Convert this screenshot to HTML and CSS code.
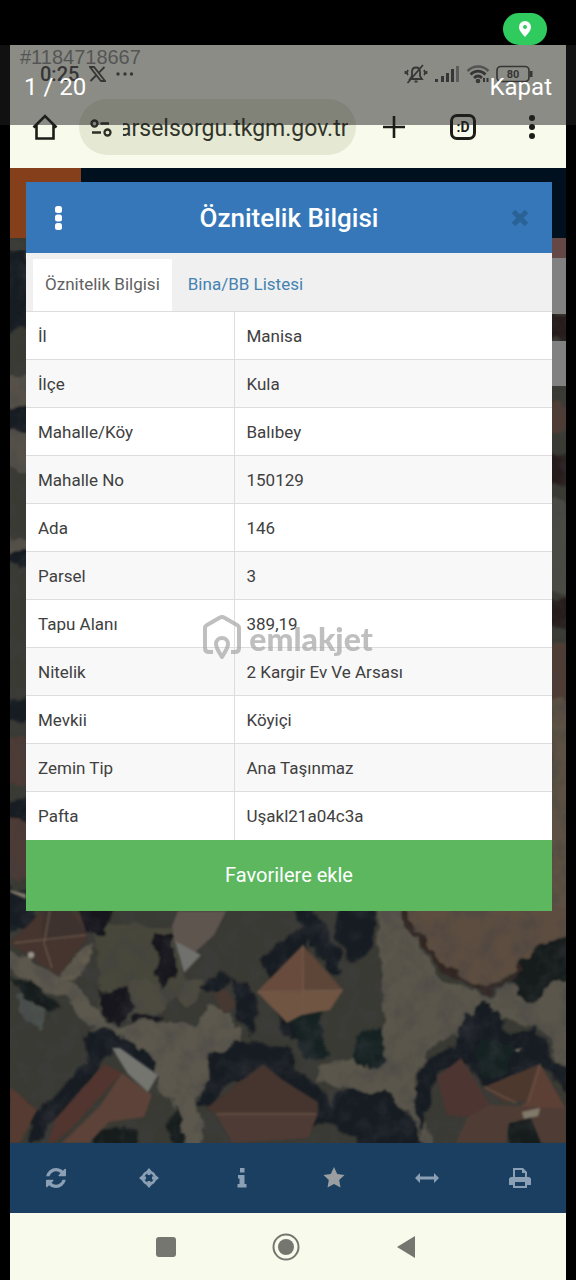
FILE: index.html
```html
<!DOCTYPE html>
<html lang="tr">
<head>
  <meta charset="UTF-8" />
  <meta name="viewport" content="width=device-width, initial-scale=1" />
  <title>Öznitelik Bilgisi</title>
  <link rel="stylesheet" href="styles.css">
</head>
<body>
  <div class="viewer">
    <div class="top-strip">
      <span class="location-pill">
        <svg width="14" height="18" viewBox="0 0 14 18"><path fill="#fff" fill-rule="evenodd" d="M7 1a6 6 0 0 1 6 6c0 4-4 7.500-6 10C5 14.500 1 11 1 7a6 6 0 0 1 6-6zm0 4a2 2 0 1 0 0 4 2 2 0 0 0 0-4z"/></svg>
      </span>
    </div>

    <div class="screen">
      <!-- Phone status bar -->
      <div class="status-bar">
        <span class="clock">0:25</span>
        <svg width="17" height="16" viewBox="0 0 17 16" fill="none" stroke="#4c4c4c" stroke-width="1.800"><path d="M1 1h4l11 14h-4zM15.500 1 9.500 7.200M7.500 9 1.500 15"/></svg>
        <svg width="18" height="4" viewBox="0 0 18 4" fill="#4c4c4c"><circle cx="2" cy="2" r="1.700"/><circle cx="9" cy="2" r="1.700"/><circle cx="15.500" cy="2" r="1.700"/></svg>
        <span class="status-icons">
          <svg width="24" height="20" viewBox="0 0 24 20" fill="none" stroke="#4c4c4c" stroke-width="1.800"><path d="M6 15h12l-2-3V8c0-3-1.500-4.500-4-4.500S8 5 8 8v4zM10.500 17.500h3M3.500 19 19 1M4 6c-1 1.500-1 4 0 5M20 6c1 1.500 1 4 0 5M1.500 7v3M22.500 7v3"/></svg>
          <svg width="26" height="18" viewBox="0 0 26 18" fill="#4c4c4c"><path d="M1 14h3v3H1zM7 11h3v6H7zM12 8h3v9h-3zM17 4h3v13h-3z"/><path fill="#999" d="M22 1h3v16h-3z"/></svg>
          <svg width="24" height="20" viewBox="0 0 24 20" fill="none" stroke="#4c4c4c" stroke-width="2.600"><path stroke="#888" d="M1.500 7c6-6 15-6 21 0"/><path d="M4.500 10.500c4.500-4.500 10.500-4.500 15 0M8 14c2.500-2.500 5.500-2.500 8 0"/><circle cx="12" cy="17" r="1"/><path stroke-width="2" d="M18 14v4M21.500 14v4"/></svg>
          <svg width="38" height="18" viewBox="0 0 38 18"><rect x="1" y="1.500" width="32" height="15" rx="4" fill="none" stroke="#4c4c4c" stroke-width="1.700"/><path fill="#4c4c4c" d="M34 6h2.500v6H34z"/><text x="17" y="13" text-anchor="middle" class="battery-text">80</text></svg>
        </span>
      </div>

      <!-- Browser address bar -->
      <div class="browser-bar">
        <button class="bar-btn" aria-label="Ana sayfa">
          <svg width="26" height="26" viewBox="0 0 26 26" fill="none" stroke="#1c1d19" stroke-width="2.600"><path d="M1.500 13.500 13 2l11.500 11.500M4.500 11v13.500h17V11"/></svg>
        </button>
        <label class="url-box">
          <svg width="22" height="18" viewBox="0 0 22 18" fill="none" stroke="#2d2f27" stroke-width="2.300"><circle cx="4.500" cy="4.500" r="3"/><path d="M10.500 4.500H19M2 13.500h9"/><circle cx="17.500" cy="13.500" r="3"/></svg>
          <input type="text" value="arselsorgu.tkgm.gov.tr" aria-label="Adres" />
        </label>
        <div class="bar-actions">
          <button class="bar-btn" aria-label="Yeni sekme">
            <svg width="24" height="24" viewBox="0 0 24 24" stroke="#1c1d19" stroke-width="2.600"><path d="M12 1v22M1 12h22"/></svg>
          </button>
          <button class="bar-btn" aria-label="Sekmeler"><span class="tab-count">:D</span></button>
          <button class="bar-btn" aria-label="Menü">
            <svg width="8" height="26" viewBox="0 0 8 26" fill="#1c1d19"><circle cx="4" cy="4" r="3"/><circle cx="4" cy="13" r="3"/><circle cx="4" cy="22" r="3"/></svg>
          </button>
        </div>
      </div>

      <!-- Map with attribute dialog -->
      <main class="map-area">
        <svg class="map" viewBox="10 168 556 975" preserveAspectRatio="xMidYMax slice" aria-hidden="true">
          <defs>
            <filter id="rough" x="0" y="0" width="100%" height="100%">
              <feTurbulence type="fractalNoise" baseFrequency=".06" numOctaves="3" seed="4" result="n"/>
              <feDisplacementMap in="SourceGraphic" in2="n" scale="16" xChannelSelector="R" yChannelSelector="G"/>
              <feGaussianBlur stdDeviation="1.200"/>
            </filter>
            <filter id="roof"><feGaussianBlur stdDeviation=".8"/></filter>
            <filter id="grain" x="0" y="0" width="100%" height="100%">
              <feTurbulence type="fractalNoise" baseFrequency=".05" numOctaves="4" seed="9"/>
              <feColorMatrix values="0 0 0 0 .05  0 0 0 0 .05  0 0 0 0 .06  1.800 0 0 0 -.75"/>
            </filter>
          </defs>
          <rect x="10" y="168" width="556" height="975" fill="#3a3a34"/>
          <g filter="url(#rough)">
            <!-- strip left of the dialog -->
            <path fill="#171a22" d="M0 250h30v80H0zM0 405h30v25H0zM0 550h30v14H0zM0 700h30v20H0zM0 800h30v30H0zM0 890h36v40H0z"/>
            <path fill="#55514a" d="M0 375h30v30H0zM0 430h30v40H0zM0 538h30v14H0z"/>
            <path fill="#4d3a34" d="M0 735h30v50H0zM0 820h30v60H0z"/>
            <!-- strip right of the dialog -->
            <path fill="#251f1d" d="M548 314h30v26h-30zM548 455h30v30h-30zM548 598h30v30h-30z"/>
            <path fill="#4c4c45" d="M548 500h30v90h-30z"/>
            <path fill="#4f3d35" d="M548 405h30v25h-30zM548 640h30v60h-30z"/>
            <path fill="#5b5143" d="M548 700h30v220h-30z"/>
            <!-- roads -->
            <path fill="#5b584d" d="M0 945 58 975 85 995 112 1025 150 1023 195 1023 215 1005 235 1020 242 1045 208 1068 198 1100 205 1150 187 1150 165 1095 155 1065 110 1035 82 1025 70 998 0 968z"/>
            <path fill="#5a564c" d="M375 905h30l15 45 30 35 40 10 35-18 45 5v90l-32-48-45-5-60 25-18 35 5 35 22 40h-20l-15-45-30-12-60-15v-15l50-12 18-35-5-60z"/>
            <path fill="#5b4e3f" d="M400 905h175v25l-35 20-22 15-28 24-30-8-35-32z"/>
            <path fill="#46463a" d="M95 925h80l10 70-45 25-40-10z"/>
            <path fill="#4e4c40" d="m128 980 18-5 22 25-12 18-28-5zM180 985l20-10 5 15-15 18-12-5z"/>
            <path fill="#625c50" d="M60 978 75 950 95 945 85 970 75 985z"/>
            <path fill="#4b514e" d="m18 995 10-8 18 20-5 20-20-8z"/>
            <!-- trees and shadows -->
            <path fill="#17191b" d="M75 905h40l-15 30h-15zM153 935h22v45l-15 8zM98 990l28-2 8 18-20 18-10-10zM130 1015h35l-10 8-20-2z"/>
            <path fill="#171c21" d="m262 960 45-40v30l-38 35zM290 905h20l30 48v18h-14zM335 905h38v45l-20 15-18-30zM200 990l20-15 30 10 10 30-8 20-15-20-5-35-20 15zM278 1005l20-5 10 45-25-8z"/>
            <path fill="#171c24" d="M210 1055l35-15 45 8 10 25 25 20 8 25-20 10-40-45-40-5-22 30-12-5zM85 1030h25l48 30-3 20-45-28-50 70-35 25 5-20-20-30 30 15 50-55z"/>
            <path fill="#181d23" d="m335 1090 50 3 30 30 10 25h-65l-30-30zM465 1015l20-15 15 15 10 22 22-14 15 25 25 25v20l-32-25-58 20-15-25-30 8-15 65-8-35 8-35 30-20z"/>
            <path fill="#172322" d="m480 1040 30 5v25l-25 8-10-20zM290 1015l30-5 8 50h-25zM355 1032l25-3 8 30-12 12-20-10z"/>
            <path fill="#191c1d" d="m520 960 20-15 35-15v50l-30 5-8 20-15-5-8-20zM508 1120l30-8 8 40h-35zM95 1130h40v20H95zM170 1100l14 20-3 30-12-8zM10 978l30 5 20 25-12 8-15-15-10-2z"/>
            <path fill="none" stroke="#302722" stroke-width="5" d="M401 905q22 60 82 84 22 2 38-25"/>
          </g>
          <rect x="10" y="168" width="556" height="975" filter="url(#grain)" opacity=".5"/>
          <g filter="url(#roof)">
            <!-- roofs -->
            <path fill="#45342f" d="m10 943 32-32 38 2 8 25-30 38-32-22z"/>
            <path fill="#3d302d" d="m42 911 28 0 16 22-44 10z"/>
            <path fill="#5f544f" d="M178 911h48l-12 24-20 18-20-12-2-15z"/>
            <path fill="#6f706d" d="m175 941 26 14-17 18z"/>
            <path fill="#5d4438" d="m303 945 40 45-86 2z"/>
            <path fill="#705542" d="m257 992 86-2-13 20-28 5-15 8z"/>
            <path fill="#684b3c" d="m303 945 1 48-47-1z"/>
            <path fill="#463832" d="m214 995 12-7 10 18-12 8z"/>
            <path fill="#51352f" d="m104 1064 18 9-52 57-17 13h-5l8-25z"/>
            <path fill="#5c4337" d="m122 1073 30 22-8 22-35 5-20 21H62l38-37z"/>
            <path fill="#74756f" d="m112 1048 8 0 38 27-10 17-20-18z"/>
            <path fill="#573b31" d="m10 1087 27 23-17 33H10z"/>
            <path fill="#44342f" d="m263 1064 20 16 35 22v12h-102l-11-5z"/>
            <path fill="#4f3b34" d="m216 1114 102 0-10 24-75 5z"/>
            <path fill="#4d3432" d="m437 1077 24-19 29 47-22 12-21-2z"/>
            <path fill="#4d372f" d="m484 1087 56-23-12 37-25 1z"/>
            <path fill="#5d3f35" d="m540 1064 26 45h-50l12-8z"/>
            <path fill="#4f3e36" d="m468 1117 22-12 76 3v35h-25l-10-25-22 5-3 20h-50z"/>
            <path fill="#817969" d="m522 1112 18-4-2 8-14 3zM514 1050l8-2-4 4zM10 890l16 4v5l-16-7z"/>
            <path fill="none" stroke="#755f4f" d="M303 945v68M257 992l86-2M14 943l72-8M50 911l-6 32 8 25M216 1114h100M484 1087l32 16M540 1064l-12 38"/>
            <circle cx="31" cy="955" r="3" fill="#99958d"/>
          </g>
          <!-- page header and map controls behind the dialog -->
          <path fill="#01101f" d="M10 168h556v70H10z"/>
          <path fill="#85401b" d="M10 168h71v70H10z"/>
          <path fill="#654746" d="M540 238h26v20h-26z"/>
          <path fill="#818181" d="M540 258h26v56h-26zM540 341h26v45h-26z"/>
        </svg>

        <section class="dialog">
          <header class="dialog-header">
            <button aria-label="Seçenekler">
              <svg width="8" height="26" viewBox="0 0 8 26" fill="#fff"><rect x="1" y="1" width="7" height="7" rx="2.500"/><rect x="1" y="9.500" width="7" height="7" rx="2.500"/><rect x="1" y="18" width="7" height="7" rx="2.500"/></svg>
            </button>
            <h1>Öznitelik Bilgisi</h1>
            <button aria-label="Kapat">
              <svg width="18" height="18" viewBox="0 0 18 18" stroke="#2b6296" stroke-width="5"><path d="m2.500 2.500 13 13M15.500 2.500l-13 13"/></svg>
            </button>
          </header>
          <nav class="tabs">
            <a href="#oznitelik" class="tab active">Öznitelik Bilgisi</a>
            <a href="#bina" class="tab">Bina/BB Listesi</a>
          </nav>
          <table class="attributes" id="oznitelik">
            <tr><th scope="row">İl</th><td>Manisa</td></tr>
            <tr><th scope="row">İlçe</th><td>Kula</td></tr>
            <tr><th scope="row">Mahalle/Köy</th><td>Balıbey</td></tr>
            <tr><th scope="row">Mahalle No</th><td>150129</td></tr>
            <tr><th scope="row">Ada</th><td>146</td></tr>
            <tr><th scope="row">Parsel</th><td>3</td></tr>
            <tr><th scope="row">Tapu Alanı</th><td>389,19</td></tr>
            <tr><th scope="row">Nitelik</th><td>2 Kargir Ev Ve Arsası</td></tr>
            <tr><th scope="row">Mevkii</th><td>Köyiçi</td></tr>
            <tr><th scope="row">Zemin Tip</th><td>Ana Taşınmaz</td></tr>
            <tr><th scope="row">Pafta</th><td>Uşakl21a04c3a</td></tr>
          </table>
          <button class="favorite-btn">Favorilere ekle</button>
        </section>
      </main>

      <!-- Map toolbar -->
      <div class="toolbar">
        <button aria-label="Yenile">
          <svg width="20" height="24" viewBox="0 0 1536 1792"><path d="M1511 1056q0 5-1 7-64 268-268 434.500t-478 166.500q-146 0-282.500-55t-243.500-157l-129 129q-19 19-45 19t-45-19-19-45v-448q0-26 19-45t45-19h448q26 0 45 19t19 45-19 45l-137 137q71 66 161 102t187 36q134 0 250-65t186-179q11-17 53-117 8-23 30-23h192q13 0 22.500 9.500t9.500 22.500zm25-800v448q0 26-19 45t-45 19h-448q-26 0-45-19t-19-45 19-45l138-138q-148-137-349-137-134 0-250 65t-186 179q-11 17-53 117-8 23-30 23h-199q-13 0-22.500-9.500t-9.500-22.500v-7q65-268 270-434.500t480-166.500q146 0 284 55.500t245 156.500l130-129q19-19 45-19t45 19 19 45z"/></svg>
        </button>
        <button aria-label="Konum">
          <svg width="20" height="20" viewBox="0 0 20 20"><circle cx="10" cy="10" r="6" fill="none" stroke="#8ba0b4" stroke-width="2.500"/><path d="m10 0 3 3.500h-1.500V7h-3V3.500H7zM10 20l-3-3.500h1.500V13h3v3.500H13zM0 10l3.500-3v1.500H7v3H3.500V13zM20 10l-3.500 3v-1.500H13v-3h3.500V7z"/></svg>
        </button>
        <button aria-label="Bilgi">
          <svg width="10" height="20" viewBox="0 0 10 20"><path d="M3 0h4.500v4.500H3zM1 7h6.500v9H9.500v3.500H.5V16h2v-5.500H1z"/></svg>
        </button>
        <button aria-label="Favoriler">
          <svg width="22" height="22" viewBox="0 0 22 22"><path fill="#9a9ea1" d="m11 0 3.200 7 7.300.900-5.300 5 1.300 7.600L11 17l-6.500 3.500 1.300-7.600-5.300-5L7.800 7z"/></svg>
        </button>
        <button aria-label="Ölçüm">
          <svg width="24" height="10" viewBox="0 0 24 10"><path d="M0 5 5 0v3.500h14V0l5 5-5 5V6.500H5V10z"/></svg>
        </button>
        <button aria-label="Yazdır">
          <svg width="22" height="20" viewBox="0 0 22 20"><path fill-rule="evenodd" d="M4 0h10l4 4v5h1.500A2.500 2.500 0 0 1 22 11.500V17h-4v3H4v-3H0v-5.500A2.500 2.500 0 0 1 2.500 9H4zm2 2v7h10V5h-3V2zm0 12v4h10v-4z"/></svg>
        </button>
      </div>

      <!-- Android navigation -->
      <div class="system-nav">
        <button aria-label="Son uygulamalar"><svg width="20" height="20" viewBox="0 0 20 20"><rect width="20" height="20" rx="3"/></svg></button>
        <button aria-label="Ana ekran"><svg width="28" height="28" viewBox="0 0 28 28"><circle cx="14" cy="14" r="12.500" fill="none" stroke="#74766f" stroke-width="2"/><circle cx="14" cy="14" r="8"/></svg></button>
        <button aria-label="Geri"><svg width="20" height="24" viewBox="0 0 20 24"><path d="M19 1v22L1 12z"/></svg></button>
      </div>
    </div>

    <!-- Gallery overlay -->
    <div class="gallery-bar">
      <span>1 / 20</span>
      <button>Kapat</button>
    </div>
    <div class="listing-no">#1184718667</div>
    <div class="watermark">
      <svg width="38" height="46" viewBox="0 0 38 46" fill="none" stroke="#aaa" stroke-width="4" stroke-linejoin="round"><path d="M10 37H6q-4 0-4-4V13q0-2 2-3L17 2.500q2-1 4 0L34 10q2 1 2 3v20q0 4-4 4h-4"/><path d="M19 42c-3-5-6-9-6-13a6 6 0 0 1 12 0c0 4-3 8-6 13z"/></svg>
      <span>emlakjet</span>
    </div>
  </div>
</body>
</html>
```
FILE: styles.css
```css
* {
  box-sizing: border-box;
}

body {
  font-family: Roboto, sans-serif;
  background: #000;
  margin: 0;
}

button {
  background: none;
  border: none;
  padding: 0;
  font-family: inherit;
  cursor: pointer;
}

svg {
  display: block;
}

.viewer {
  position: relative;
  min-height: 100vh;
  display: flex;
  flex-direction: column;
}

.top-strip {
  display: flex;
  justify-content: flex-end;
  padding: 13px 29px 0;
}

.location-pill {
  display: flex;
  align-items: center;
  justify-content: center;
  width: 44px;
  height: 32px;
  border-radius: 16px;
  background: #2fcb5f;
}

.screen {
  flex: 1;
  display: flex;
  flex-direction: column;
  margin: 0 10px;
  background: #f8fbec;
}

/* Status and address bars */
.status-bar {
  display: flex;
  align-items: center;
  gap: 10px;
  height: 54px;
  padding: 4px 32px 0 30px;
  color: #4c4c4c;
}

.clock {
  font-size: 20px;
  font-weight: 500;
}

.status-icons {
  display: flex;
  align-items: center;
  gap: 6px;
  margin-left: auto;
}

.battery-text {
  font-size: 11px;
  font-weight: 700;
  fill: #4c4c4c;
}

.browser-bar {
  display: grid;
  grid-template-columns: 69px 1fr 210px;
  padding-bottom: 13px;
}

.bar-btn {
  display: flex;
  align-items: center;
  justify-content: center;
}

.url-box {
  display: flex;
  align-items: center;
  gap: 11px;
  min-width: 0;
  height: 56px;
  padding: 2px 8px 0 11px;
  border-radius: 28px;
  background: #e5e9d4;
}

.url-box svg {
  flex-shrink: 0;
}

.url-box input {
  flex: 1;
  min-width: 0;
  padding: 0;
  border: none;
  background: none;
  font-family: inherit;
  font-size: 23px;
  color: #32342b;
  text-indent: -4px;
}

.bar-actions {
  display: grid;
  grid-template-columns: repeat(3, 1fr);
  padding-left: 4px;
}

.tab-count {
  width: 26px;
  height: 26px;
  border: 3px solid #1c1d19;
  border-radius: 7px;
  font-size: 14px;
  line-height: 20px;
  font-weight: 700;
  color: #1c1d19;
}

/* Map and dialog share one grid cell */
.map-area {
  flex: 1;
  display: grid;
  align-items: start;
}

.map,
.dialog {
  grid-area: 1 / 1;
}

.map {
  width: 100%;
  height: 100%;
  min-height: 0;
  contain: size;
}

.dialog {
  margin: 14px 14px 232px 16px;
  background: #fff;
  color: #404040;
  font-size: 17px;
}

.dialog-header {
  display: grid;
  grid-template-columns: 64px 1fr 64px;
  align-items: center;
  height: 71px;
  background: #3577b8;
}

.dialog-header button {
  display: flex;
  justify-content: center;
}

.dialog-header h1 {
  margin: 0;
  font-size: 26px;
  font-weight: 500;
  color: #fff;
  text-align: center;
}

.tabs {
  display: flex;
  height: 58px;
  padding: 6px 7px 0;
  background: #f0f0f0;
  gap: 4px;
}

.tab {
  padding: 0 12px;
  line-height: 51px;
  color: #4482b0;
  text-decoration: none;
}

.tab.active {
  background: #fff;
  color: #606060;
}

.attributes {
  width: 100%;
  border-collapse: collapse;
}

.attributes th,
.attributes td {
  height: 48px;
  padding: 0 12px;
  border-top: 1px solid #ddd;
  font-weight: 400;
  text-align: left;
}

.attributes th {
  width: 208px;
  border-right: 1px solid #ddd;
}

.attributes tr:nth-child(even) {
  background: #f8f8f8;
}

.favorite-btn {
  width: 100%;
  height: 71px;
  background: #5cb75f;
  color: #fff;
  font-size: 20px;
}

/* Bottom bars */
.toolbar {
  display: grid;
  grid-template-columns: repeat(6, 1fr);
  height: 70px;
  background: #1b3f60;
}

.toolbar button,
.system-nav button {
  display: flex;
  align-items: center;
  justify-content: center;
}

.toolbar svg {
  fill: #8ba0b4;
}

.system-nav {
  display: grid;
  grid-template-columns: repeat(3, 120px);
  justify-content: center;
  height: 67px;
  padding-right: 4px;
}

.system-nav svg {
  fill: #74766f;
}

/* Gallery overlay */
.gallery-bar {
  position: absolute;
  top: 45px;
  left: 0;
  right: 0;
  height: 80px;
  display: flex;
  align-items: center;
  justify-content: space-between;
  padding: 3px 24px 0;
  background: rgba(33, 33, 33, 0.51);
  color: #fff;
  font-size: 24px;
}

.gallery-bar button {
  color: #fff;
  font-size: 24px;
}

.listing-no {
  position: absolute;
  top: 46px;
  left: 20px;
  font-family: "Liberation Sans", sans-serif;
  font-size: 20px;
  color: #555;
}

.watermark {
  position: absolute;
  inset: 0;
  display: flex;
  align-items: center;
  justify-content: center;
  gap: 8px;
  padding-bottom: 4px;
  opacity: 0.75;
  pointer-events: none;
  font-family: Lato, sans-serif;
  font-size: 32px;
  font-weight: 900;
  color: #aaa;
}
```
